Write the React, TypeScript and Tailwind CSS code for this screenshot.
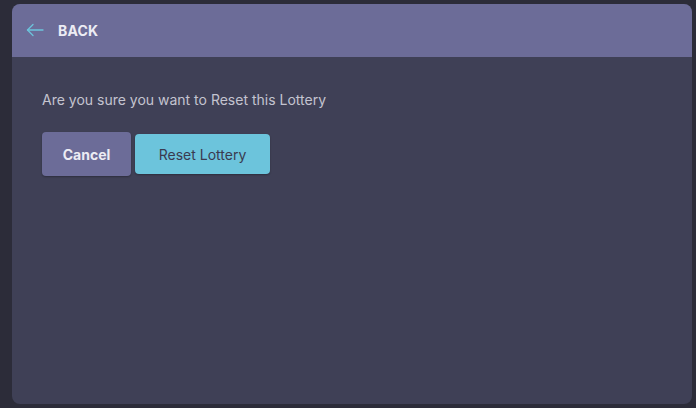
export default function App() {
  return (
    <div className="w-[696px] h-[408px] bg-[#2c2c39] pt-[4px] pl-[12px] pr-[4px] pb-[4px] overflow-hidden" style={{ fontFamily: "Inter, 'Noto Sans', sans-serif" }}>
      <div className="w-[680px] h-[400px] bg-[#3f4056] rounded-[8px] overflow-hidden flex flex-col">
        <div className="h-[53px] bg-[#6c6c98] flex items-center pl-[14px] shrink-0">
          <svg width="18" height="14" viewBox="0 0 18 14" fill="none" stroke="#6cc4dc" strokeWidth="1.3" strokeLinecap="round" strokeLinejoin="round" className="mr-[14px] -mt-[2px]">
            <path d="M17 7H1.5" />
            <path d="M7 1.5L1.5 7L7 12.5" />
          </svg>
          <span className="text-[14px] font-bold text-[#ececf4] tracking-[0.01em]">BACK</span>
        </div>
        <div className="pl-[30px] pt-[33px]">
          <p className="text-[14px] text-[#c4c4d0] leading-[20px]">Are you sure you want to Reset this Lottery</p>
          <div className="flex items-center gap-[4px] mt-[22px]">
            <button className="w-[89px] h-[44px] bg-[#6c6c98] rounded-[4px] text-[14px] font-bold text-[#ececf4] shadow-[0_1px_2px_rgba(0,0,0,0.3)]">Cancel</button>
            <button className="w-[135px] h-[40px] bg-[#6cc4dc] rounded-[4px] text-[14px] text-[#3a3b50] shadow-[0_1px_2px_rgba(0,0,0,0.3)]">Reset Lottery</button>
          </div>
        </div>
      </div>
    </div>
  );
}
